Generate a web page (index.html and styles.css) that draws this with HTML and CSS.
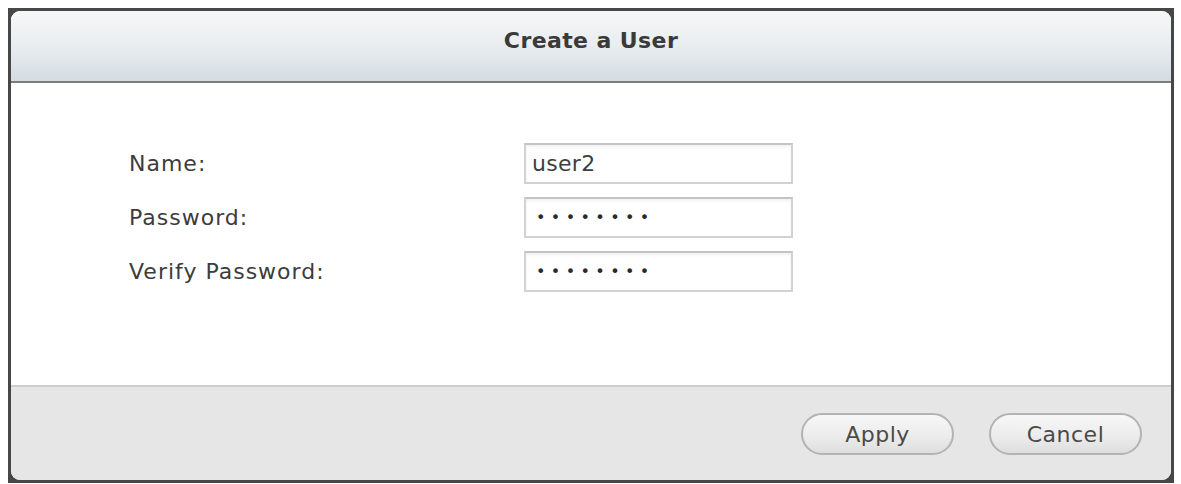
FILE: index.html
```html
<!DOCTYPE html>
<html>
<head>
<meta charset="utf-8">
<link rel="stylesheet" href="styles.css">
</head>
<body>
<div class="frame">
  <div class="dialog">
    <div class="header">Create a User</div>
    <div class="content">
      <div class="form">
        <div class="label">Name:</div>
        <div class="field"><span class="value">user2</span></div>
        <div class="label">Password:</div>
        <div class="field"><span class="dots">••••••••</span></div>
        <div class="label">Verify Password:</div>
        <div class="field"><span class="dots">••••••••</span></div>
      </div>
    </div>
    <div class="footer">
      <button class="btn">Apply</button>
      <button class="btn">Cancel</button>
    </div>
  </div>
</div>
</body>
</html>
```

FILE: styles.css
```css
html, body {
  margin: 0;
  padding: 0;
  background: #ffffff;
}
body {
  padding: 8px;
  font-family: "DejaVu Sans", Verdana, sans-serif;
}
.frame {
  width: 1160px;
  height: 469px;
  padding: 3px;
  background: #474747;
  display: flex;
}
.dialog {
  flex: 1;
  display: flex;
  flex-direction: column;
  border-radius: 9px;
  overflow: hidden;
  background: #ffffff;
}
.header {
  height: 72px;
  flex: none;
  border-bottom: 2px solid #7b7b7b;
  background: linear-gradient(to bottom, #f6f7f8 0%, #e9edf0 50%, #d4dce2 100%);
  display: flex;
  align-items: center;
  justify-content: center;
  font-weight: bold;
  font-size: 22px;
  letter-spacing: 0.4px;
  color: #3a3a3a;
  padding-bottom: 12px;
  box-sizing: border-box;
}
.content {
  flex: 1;
  background: #ffffff;
  padding: 60px 0 0 118px;
}
.form {
  display: grid;
  grid-template-columns: 395px 269px;
  row-gap: 13px;
  align-items: center;
}
.label {
  font-size: 22px;
  letter-spacing: 1px;
  color: #3c3c3c;
}
.field {
  height: 41px;
  box-sizing: border-box;
  border: 2px solid #d2d2d2;
  border-top-color: #c4c4c4;
  box-shadow: inset 0 2px 3px rgba(0,0,0,0.06);
  background: #ffffff;
  display: flex;
  align-items: center;
  padding-left: 6px;
}
.value {
  font-size: 22px;
  color: #3e3e3e;
  letter-spacing: 0.3px;
}
.dots {
  font-size: 16px;
  letter-spacing: 5.4px;
  color: #2a2a2a;
  padding-left: 4px;
}
.footer {
  height: 95px;
  flex: none;
  border-top: 2px solid #cdcdcd;
  background: #e6e6e6;
  display: flex;
  justify-content: flex-end;
  align-items: flex-start;
  gap: 35px;
  padding: 26px 29px 0 0;
  box-sizing: border-box;
}
.btn {
  width: 153px;
  height: 42px;
  border-radius: 21px;
  border: 2px solid #b3b3b3;
  background: linear-gradient(to bottom, #f7f7f7 0%, #ececec 55%, #dedede 100%);
  font-family: "DejaVu Sans", Verdana, sans-serif;
  font-size: 22px;
  letter-spacing: 0.5px;
  color: #4a4a4a;
  padding: 0;
}
```
